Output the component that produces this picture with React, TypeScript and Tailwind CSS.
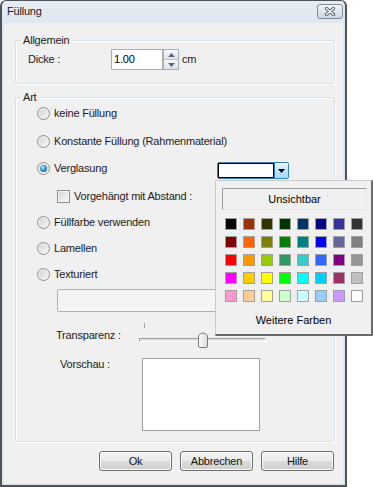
import React from 'react';

const swatches = [
    '#000000', '#993300', '#333300', '#003300', '#003366', '#000080', '#333399', '#333333',
    '#800000', '#ff6600', '#808000', '#008000', '#008080', '#0000ff', '#666699', '#808080',
    '#ff0000', '#ff9900', '#99cc00', '#339966', '#33cccc', '#3366ff', '#800080', '#969696',
    '#ff00ff', '#ffcc00', '#ffff00', '#00ff00', '#00ffff', '#00ccff', '#993366', '#c0c0c0',
    '#ff99cc', '#ffcc99', '#ffff99', '#ccffcc', '#ccffff', '#99ccff', '#cc99ff', '#ffffff',
];

function Radio({ checked }: { checked?: boolean }) {
    return (
        <span className="flex h-[13px] w-[13px] shrink-0 items-center justify-center rounded-full border border-[#8e8f8f] bg-[linear-gradient(135deg,#cfcfcf,#fafafa)] shadow-[inset_0_0_0_1px_#f3f3f3]">
            {checked && (
                <span className="h-[7px] w-[7px] rounded-full bg-[radial-gradient(circle_at_40%_35%,#c4ecff_0%,#3b93dc_45%,#0e3f7e_100%)]" />
            )}
        </span>
    );
}

function Check() {
    return (
        <span className="h-[13px] w-[13px] shrink-0 border border-[#8e8f8f] bg-[linear-gradient(135deg,#d6d6d6,#fbfbfb)] shadow-[inset_0_0_0_1px_#f4f4f4]" />
    );
}

function Group({ title, className, children }: { title: string; className?: string; children: React.ReactNode }) {
    return (
        <div className={`ml-[11px] w-[320px] rounded-[3px] border border-[#d5dfe5] shadow-[inset_1px_1px_0_#fff,1px_1px_0_#fff] ${className ?? ''}`}>
            <div className="-mt-[7px] ml-[5px] w-fit bg-[#f0f0f0] px-[2px] leading-[13px]">{title}</div>
            {children}
        </div>
    );
}

function WinButton({ label }: { label: string }) {
    return (
        <button className="h-[20px] w-[73px] rounded-[3px] border border-[#707070] bg-[linear-gradient(#f2f2f2_0%,#ebebeb_50%,#dddddd_50%,#cfcfcf_100%)] text-[11px] leading-[13px] tracking-[-0.2px] text-[#111] shadow-[inset_0_0_0_1px_#fcfcfc]">
            {label}
        </button>
    );
}

function ColorPopup() {
    return (
        <div className="absolute left-[-2px] top-[18px] z-10 h-[156px] w-[158px] border-t border-l border-r-2 border-b-2 border-t-[#c9c9c9] border-l-[#c9c9c9] border-r-[#6b6b6b] border-b-[#6b6b6b] bg-[#f0f0f0] tracking-normal">
            <div className="ml-[6px] mt-[7px] flex h-[22px] w-[145px] items-center justify-center border border-t-[#9b9b9b] border-l-[#9b9b9b] border-r-[#e6e6e6] border-b-[#e6e6e6] bg-[repeating-conic-gradient(#e9e9e9_0%_25%,#f8f8f8_0%_50%)] bg-[length:2px_2px] text-[11px] text-black">
                Unsichtbar
            </div>
            <div className="ml-[9px] mt-[8px] grid w-fit grid-cols-8 gap-[6px]">
                {swatches.map(c => (
                    <span key={c} className="h-[12px] w-[12px] border border-[#a0a0a0]" style={{ background: c }} />
                ))}
            </div>
            <div className="mt-[12px] text-center text-[11px] leading-[13px] text-black">Weitere Farben</div>
        </div>
    );
}

export default function App() {
    return (
        <div className="h-[487px] w-[347px] font-['Liberation_Sans',Arial,sans-serif] text-[11px] tracking-[-0.2px] text-[#1b1b1b]">
            <div className="flex h-full flex-col rounded-t-[6px] border-x-2 border-t border-b-2 border-[#4f5358] bg-[linear-gradient(#e6ecf3,#d8e2ed_40px,#dbe4ee)]">
                {/* title bar */}
                <div className="flex h-[21px] items-start justify-between">
                    <span className="ml-[5px] mt-[4px] text-[11px] leading-[13px] text-[#1e1e1e]">Füllung</span>
                    <span className="mr-[2px] mt-[3px] flex h-[15px] w-[26px] items-center justify-center rounded-[3px] border border-[#7d8a9a] bg-[linear-gradient(#f4f6f9,#dfe5ec_50%,#cfd8e2)]">
                        <svg width="12" height="9" viewBox="0 0 12 9">
                            <path d="M2.5 1.5 L9.5 7.5 M9.5 1.5 L2.5 7.5" stroke="#55606e" strokeWidth="3.2" strokeLinecap="round" />
                            <path d="M2.5 1.5 L9.5 7.5 M9.5 1.5 L2.5 7.5" stroke="#ffffff" strokeWidth="1.4" strokeLinecap="round" />
                        </svg>
                    </span>
                </div>

                {/* client area */}
                <div className="mx-[1px] mb-[1px] flex-1 border border-[#e2e9f1] bg-[#f0f0f0]">
                    <Group title="Allgemein" className="mt-[17px] pb-[13px]">
                        <div className="mt-[2px] flex h-[21px] items-center pl-[12px]">
                            <span className="w-[83px]">Dicke :</span>
                            <div className="flex h-[21px] w-[52px] items-center border border-[#abadb3] bg-white pl-[2px] text-black">1.00</div>
                            <div className="flex h-[21px] w-[16px] flex-col border border-[#a5afba] bg-[#f4f4f4]">
                                <span className="flex flex-1 items-center justify-center border-b border-[#b9c2cc] bg-[linear-gradient(#fbfbfb,#e3e3e3)]">
                                    <svg width="7" height="4" viewBox="0 0 7 4"><path d="M0 4 L3.5 0 L7 4 Z" fill="#4c6a92" /></svg>
                                </span>
                                <span className="flex flex-1 items-center justify-center bg-[linear-gradient(#f7f7f7,#e0e0e0)]">
                                    <svg width="7" height="4" viewBox="0 0 7 4"><path d="M0 0 L7 0 L3.5 4 Z" fill="#4c6a92" /></svg>
                                </span>
                            </div>
                            <span className="ml-[3px]">cm</span>
                        </div>
                    </Group>

                    <Group title="Art" className="mt-[13px] pb-[10px]">
                        <label className="mt-[2px] flex h-[14px] items-center gap-[4px] pl-[21px]">
                            <Radio />keine Füllung
                        </label>
                        <label className="mt-[14px] flex h-[14px] items-center gap-[4px] pl-[21px]">
                            <Radio />Konstante Füllung (Rahmenmaterial)
                        </label>
                        <div className="mt-[13px] flex items-start pl-[21px]">
                            <label className="flex h-[14px] w-[180px] items-center gap-[4px]">
                                <Radio checked />Verglasung
                            </label>
                            <div className="relative mt-[1px]">
                                <div className="flex h-[17px] w-[72px] rounded-[2px] border border-[#3c7fb1] bg-white">
                                    <span className="flex-1 border border-black bg-white" />
                                    <span className="flex w-[14px] items-center justify-center border-l border-[#3c7fb1] bg-[linear-gradient(#eaf6fd,#bee6fd_50%,#a7d9f5)]">
                                        <svg width="7" height="4" viewBox="0 0 7 4"><path d="M0 0 L7 0 L3.5 4 Z" fill="#000" /></svg>
                                    </span>
                                </div>
                                <ColorPopup />
                            </div>
                        </div>
                        <label className="mt-[10px] flex h-[14px] items-center gap-[4px] pl-[41px]">
                            <Check />Vorgehängt mit Abstand :
                        </label>
                        <label className="mt-[12px] flex h-[14px] items-center gap-[4px] pl-[21px]">
                            <Radio />Füllfarbe verwenden
                        </label>
                        <label className="mt-[12px] flex h-[14px] items-center gap-[4px] pl-[21px]">
                            <Radio />Lamellen
                        </label>
                        <label className="mt-[12px] flex h-[14px] items-center gap-[4px] pl-[21px]">
                            <Radio />Texturiert
                        </label>
                        <div className="ml-[41px] mt-[8px] h-[23px] w-[265px] rounded-[2px] border border-[#adb2b5] bg-[#f4f4f4]" />

                        <div className="mt-[10px] flex h-[26px] items-center pl-[40px]">
                            <span className="w-[83px]">Transparenz :</span>
                            <div className="relative h-[26px] w-[127px]">
                                <div className="ml-[5px] mt-[1px] h-[5px] w-px bg-[#a0a0a0]" />
                                <div className="ml-[121px] -mt-[5px] h-[5px] w-px bg-[#a0a0a0]" />
                                <div className="mt-[10px] h-[4px] border border-t-[#9d9d9d] border-l-[#9d9d9d] border-r-[#fcfcfc] border-b-[#fcfcfc] bg-[#e4e4e4]" />
                                <svg className="absolute left-[59px] top-[9px]" width="10" height="17" viewBox="0 0 10 17">
                                    <defs>
                                        <linearGradient id="thumb" x1="0" x2="1" y1="0" y2="0">
                                            <stop offset="0" stopColor="#fbfbfb" />
                                            <stop offset="1" stopColor="#dcdcdc" />
                                        </linearGradient>
                                    </defs>
                                    <path d="M0.5 4.5 Q5 -0.5 9.5 4.5 V15 Q9.5 16.5 8 16.5 H2 Q0.5 16.5 0.5 15 Z" fill="url(#thumb)" stroke="#7a7a7a" />
                                </svg>
                            </div>
                        </div>

                        <div className="mt-[10px] flex items-start pl-[44px]">
                            <span className="w-[82px] leading-[13px]">Vorschau :</span>
                            <div className="h-[73px] w-[118px] border border-[#a0a0a0] bg-white" />
                        </div>
                    </Group>

                    <div className="mt-[9px] flex justify-end gap-[8px] pr-[9px]">
                        <WinButton label="Ok" />
                        <WinButton label="Abbrechen" />
                        <WinButton label="Hilfe" />
                    </div>
                </div>
            </div>
        </div>
    );
}
